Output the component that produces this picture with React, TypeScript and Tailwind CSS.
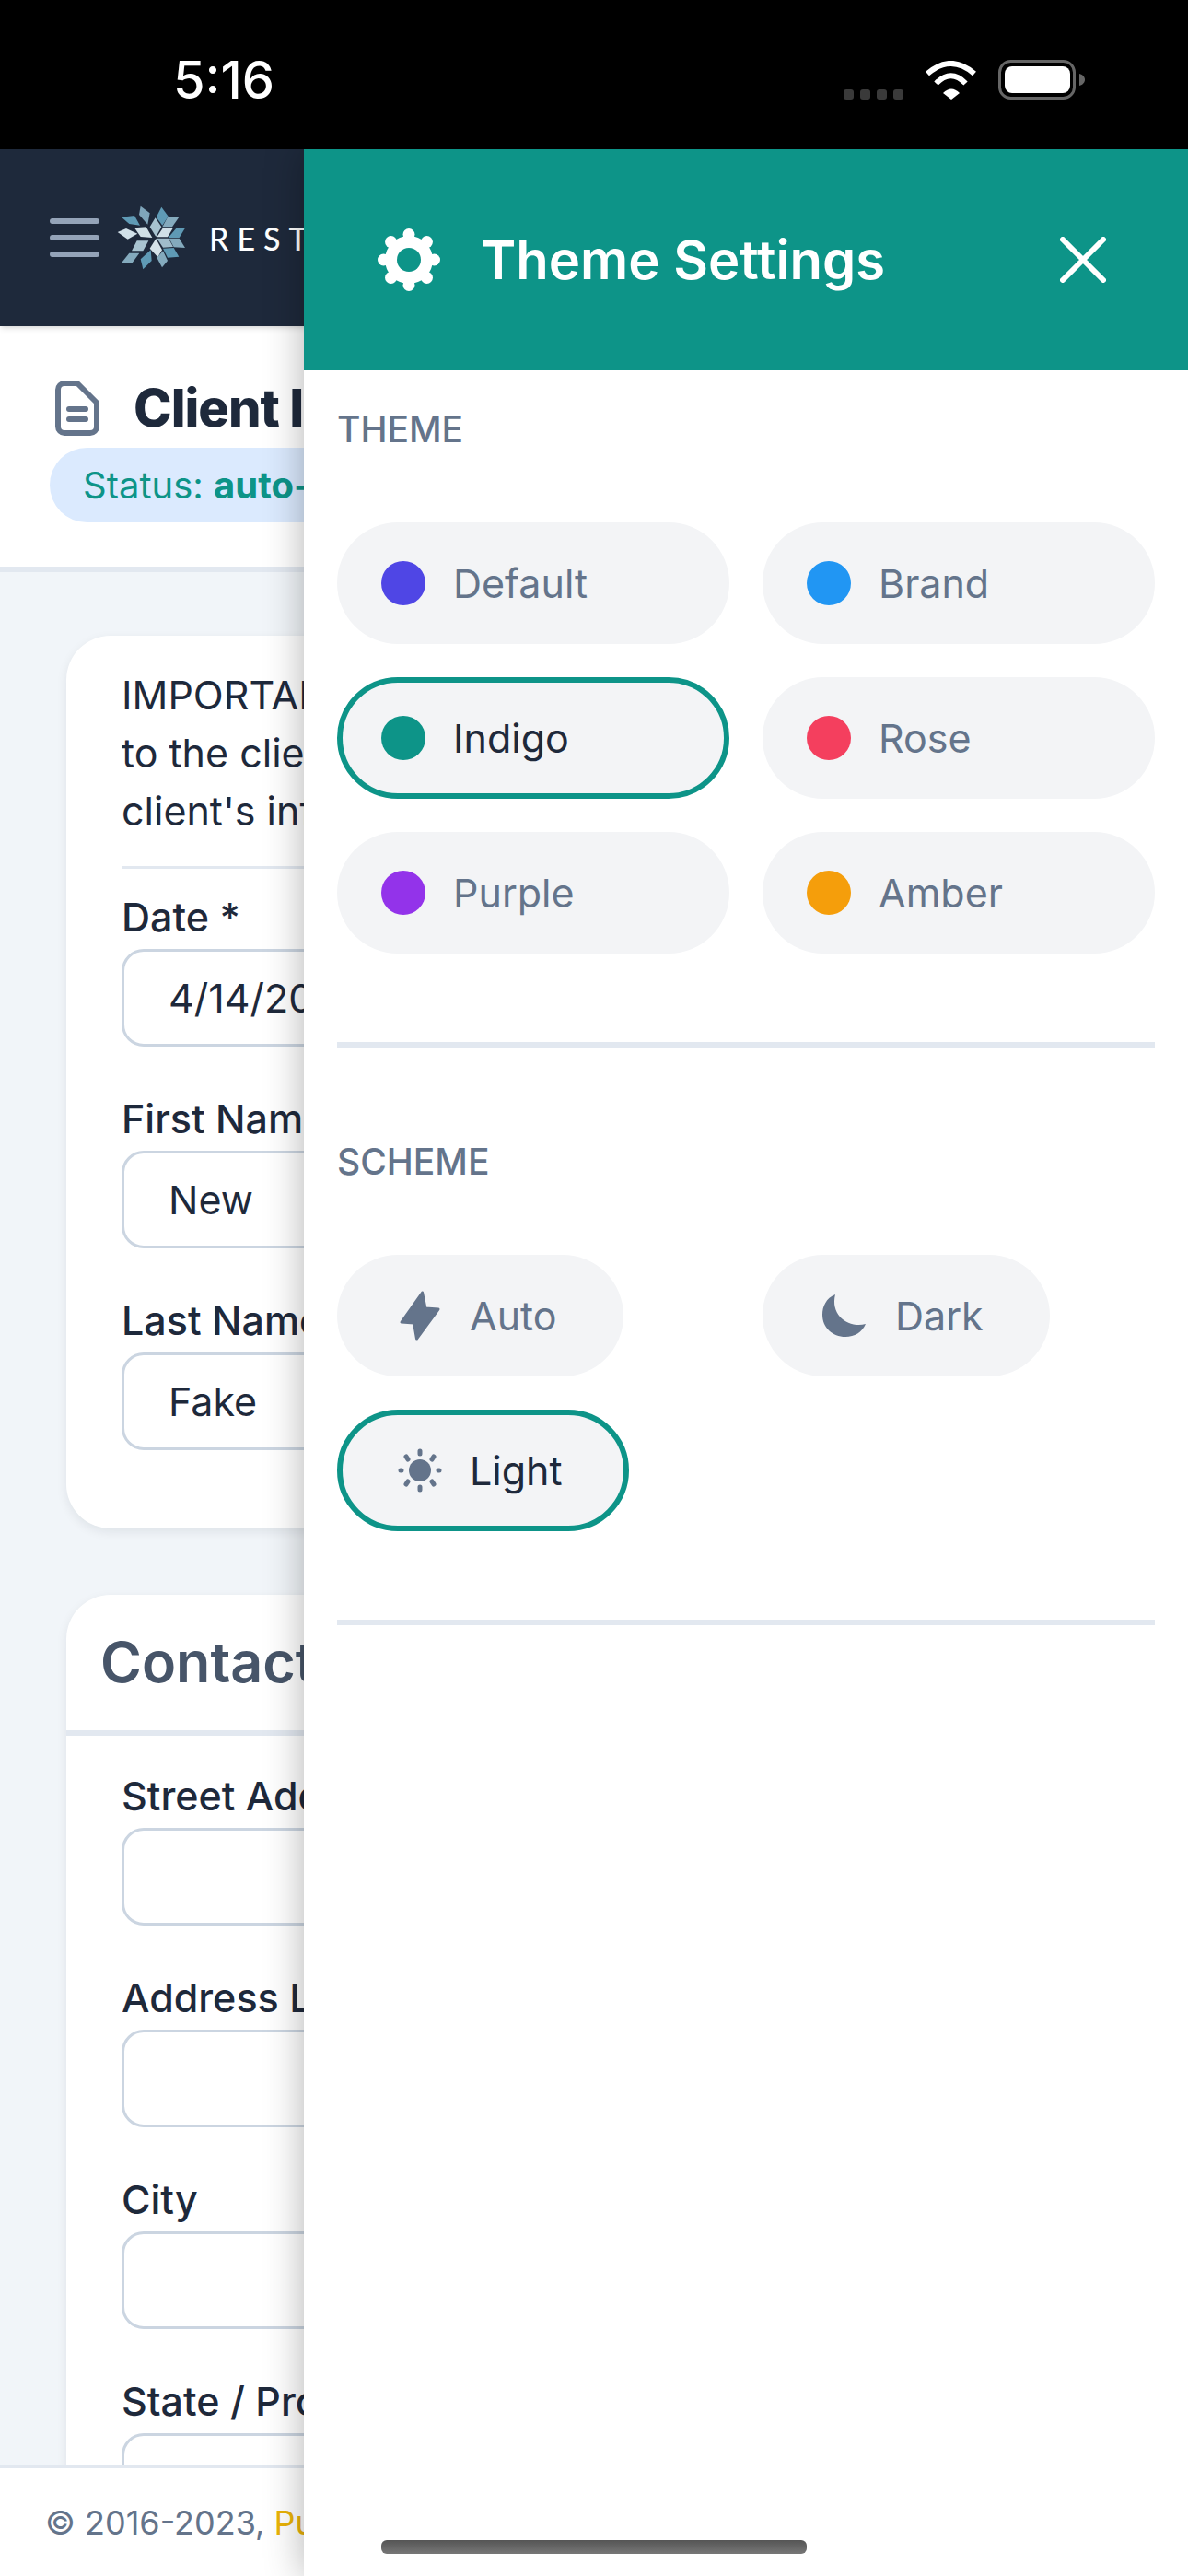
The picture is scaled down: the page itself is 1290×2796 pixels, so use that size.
const themes = [
  { name: "Default", dot: "bg-[#4f46e5]", active: false },
  { name: "Brand", dot: "bg-[#2196f3]", active: false },
  { name: "Indigo", dot: "bg-[#0d9488]", active: true },
  { name: "Rose", dot: "bg-[#f43f5e]", active: false },
  { name: "Purple", dot: "bg-[#9333ea]", active: false },
  { name: "Amber", dot: "bg-[#f59e0b]", active: false },
]

const kites = [
  { p: "367,100 372,72 402,95 395,132", c: "#7fa5ba" },
  { p: "310,108 352,103 370,135 335,130", c: "#5f9ab5" },
  { p: "297,157 325,145 362,162 330,180", c: "#d1e0e8" },
  { p: "352,143 390,140 410,175 372,172", c: "#d0dfe6" },
  { p: "360,185 398,185 380,218 343,218", c: "#a8c3d0" },
  { p: "335,225 368,225 345,257 310,257", c: "#84aabd" },
  { p: "372,245 405,215 408,250 380,278", c: "#5f9ab5" },
  { p: "402,210 422,178 442,215 428,238", c: "#d5e2e9" },
  { p: "425,240 445,218 460,250 442,272", c: "#84aabd" },
  { p: "445,210 480,208 497,237 460,240", c: "#5f9ab5" },
  { p: "425,177 463,177 478,205 445,207", c: "#a0bccb" },
  { p: "465,177 498,177 517,208 480,206", c: "#84aabd" },
  { p: "490,142 518,142 498,175 462,175", c: "#5f9ab5" },
  { p: "425,173 445,143 478,143 460,173", c: "#d1e0e8" },
  { p: "460,108 497,108 475,140 443,140", c: "#84aabd" },
  { p: "440,75 462,105 443,135 423,108", c: "#5f9ab5" },
  { p: "420,110 440,140 422,172 402,140", c: "#a8c3d0" },
]

function Logo() {
  return (
    <svg width="75" height="70" viewBox="295 70 225 210" className="shrink-0">
      {kites.map((k, i) => (
        <polygon key={i} points={k.p} fill={k.c} />
      ))}
    </svg>
  )
}

function Gear() {
  const teeth = [0, 45, 90, 135, 180, 225, 270, 315]
  return (
    <svg width="68" height="68" viewBox="0 0 68 68" className="shrink-0">
      <circle cx="34" cy="34" r="26" fill="#fff" />
      {teeth.map((t) => (
        <circle
          key={t}
          cx={34 + 27.5 * Math.cos((t * Math.PI) / 180)}
          cy={34 + 27.5 * Math.sin((t * Math.PI) / 180)}
          r="6.5"
          fill="#fff"
        />
      ))}
      <circle cx="34" cy="34" r="13" fill="#0d9488" />
    </svg>
  )
}

function BoltIcon() {
  return (
    <svg width="48" height="54" viewBox="0 0 48 54" className="shrink-0">
      <path
        d="M26.6 2 L4 34 L17.5 35 L20.5 52 L44 20 L30 19 Z"
        fill="#64748b"
        stroke="#64748b"
        strokeWidth="3"
        strokeLinejoin="round"
      />
    </svg>
  )
}

function MoonIcon() {
  return (
    <svg width="48" height="48" viewBox="0 0 48 48" className="shrink-0">
      <path d="M14 1 C4 5 0 14 0 23 C0 37 11 47 25 47 C35 47 43 42 47 33 C30 38 8 25 14 1Z" fill="#64748b" />
    </svg>
  )
}

function SunIcon() {
  return (
    <svg width="48" height="48" viewBox="0 0 48 48" className="shrink-0" stroke="#64748b" strokeWidth="5" strokeLinecap="round">
      <circle cx="24" cy="24" r="12" fill="#64748b" stroke="none" />
      <path d="M24 3V6M24 42V45M3 24H4M44 24H45M9 9L11 12M39 9L37 12M9 39L11 36M39 39L37 36" fill="none" />
    </svg>
  )
}

function Field({ label, value = "" }: { label: string; value?: string }) {
  return (
    <div className="mt-[47px] first:mt-0">
      <div className="text-[43px] leading-[63px] font-medium text-[#1e293b] whitespace-nowrap">{label}</div>
      <input
        readOnly
        value={value}
        className="mt-[3px] block h-[106px] w-full rounded-[24px] border-[3px] border-[#cbd5e1] bg-white pl-[48px] text-[43px] text-[#1e293b]"
      />
    </div>
  )
}

function Pill({ active, children, className }: { active: boolean; children: React.ReactNode; className: string }) {
  return (
    <div
      className={`flex h-[132px] items-center rounded-full border-[6px] bg-[#f3f4f6] text-[43px] ${
        active ? "border-[#0d9488] text-[#1e293b]" : "border-transparent text-[#64748b]"
      } ${className}`}
    >
      {children}
    </div>
  )
}

export default function App() {
  return (
    <div className="relative flex h-[2796px] w-[1290px] flex-col overflow-hidden bg-[#f1f5f9] font-['Inter',sans-serif]">
      {/* Status bar */}
      <div className="flex h-[162px] shrink-0 items-end bg-black pb-[54px] pl-[188px] pr-[112px]">
        <div className="-mb-[7px] text-[56px] leading-[56px] font-medium text-white">5:16</div>
        <div className="ml-auto flex items-end gap-[23px]">
          <div className="flex gap-[7px]">
            <div className="h-[11px] w-[11px] rounded-[3px] bg-[#3a3a3a]" />
            <div className="h-[11px] w-[11px] rounded-[3px] bg-[#3a3a3a]" />
            <div className="h-[11px] w-[11px] rounded-[3px] bg-[#3a3a3a]" />
            <div className="h-[11px] w-[11px] rounded-[3px] bg-[#3a3a3a]" />
          </div>
          <svg width="57" height="42" viewBox="0 0 57 42">
            <path d="M3 14 Q28.5 -8 54 14" fill="none" stroke="#fff" strokeWidth="6" />
            <path d="M12.5 24.5 Q28.5 8 44.5 24.5" fill="none" stroke="#fff" strokeWidth="6" />
            <path d="M20 35 Q29 26 38 35 L29 42 Z" fill="#fff" />
          </svg>
          <svg width="94" height="43" viewBox="0 0 94 43">
            <rect x="1.5" y="1.5" width="81" height="40" rx="12" fill="none" stroke="#666" strokeWidth="3" />
            <rect x="7" y="7" width="71" height="29" rx="8" fill="#fff" />
            <path d="M88 15 C92 16 94 19 94 21.5 C94 24 92 27 88 28 Z" fill="#666" />
          </svg>
        </div>
      </div>

      {/* App header */}
      <div className="z-10 flex h-[192px] shrink-0 items-center bg-[#1e293b] pl-[54px] shadow-md">
        <div className="flex w-[54px] shrink-0 flex-col gap-[12px]">
          <div className="h-[6px] rounded-full bg-[#94a3b8]" />
          <div className="h-[6px] rounded-full bg-[#94a3b8]" />
          <div className="h-[6px] rounded-full bg-[#94a3b8]" />
        </div>
        <div className="ml-[19px]">
          <Logo />
        </div>
        <div className="ml-[25px] font-['Lato',sans-serif] text-[34px] font-medium tracking-[9px] text-white whitespace-nowrap">
          RESTORE
        </div>
      </div>

      {/* Page header */}
      <div className="shrink-0 border-b-[6px] border-[#e2e8f0] bg-white pb-[48px] pl-[54px] pt-[53px]">
        <div className="flex h-[72px] items-center">
          <svg width="48" height="60" viewBox="0 0 48 60" fill="none" stroke="#64748b" strokeWidth="6" strokeLinecap="round" strokeLinejoin="round" className="ml-[6px] shrink-0">
            <path d="M10 3 H24 L45 24 V50 A7 7 0 0 1 38 57 H10 A7 7 0 0 1 3 50 V10 A7 7 0 0 1 10 3 Z" />
            <path d="M15 31 H33 M15 42 H33" />
          </svg>
          <div className="ml-[37px] text-[56px] font-extrabold tracking-[-1px] text-[#1e293b] whitespace-nowrap">Client In</div>
        </div>
        <div className="mt-[7px] flex h-[81px] w-[600px] items-center rounded-full bg-[#dbeafe] pl-[36px] text-[40px] text-[#0d9488] whitespace-nowrap">
          Status:&nbsp;<span className="font-bold">auto-</span>
        </div>
      </div>

      {/* Scrolling content */}
      <div className="min-h-0 flex-1 overflow-hidden px-[72px] pt-[69px]">
        <div className="rounded-[48px] bg-white pb-[85px] pl-[60px] pr-[60px] pt-[33px] shadow-[0_4px_12px_rgba(15,23,42,0.08)]">
          <div className="text-[43px] leading-[63px] text-[#1e293b] whitespace-nowrap">
            IMPORTANT
            <br />
            to the client
            <br />
            client's info
          </div>
          <div className="mt-[28px] h-[3px] bg-[#e2e8f0]" />
          <div className="mt-[21px]">
            <Field label="Date *" value="4/14/2023" />
            <Field label="First Name" value="New" />
            <Field label="Last Name" value="Fake" />
          </div>
        </div>

        <div className="mt-[72px] rounded-[48px] bg-white shadow-[0_4px_12px_rgba(15,23,42,0.08)]">
          <div className="box-content flex h-[147px] items-center border-b-[6px] border-[#e2e8f0] pl-[37px] text-[61px] font-semibold text-[#475569]">
            Contact
          </div>
          <div className="px-[60px] pt-[34px]">
            <Field label="Street Address" />
            <Field label="Address Line 2" />
            <Field label="City" />
            <Field label="State / Province" />
          </div>
        </div>
      </div>

      {/* Footer */}
      <div className="flex h-[120px] shrink-0 items-center border-t-[3px] border-[#e2e8f0] bg-white pl-[49px] text-[36px] text-[#64748b] whitespace-nowrap">
        © 2016-2023,&nbsp;<span className="text-[#eab308]">Pu</span>
      </div>

      {/* Theme settings drawer */}
      <div className="absolute bottom-0 left-[330px] right-0 top-[162px] z-20 bg-white shadow-[0_0_40px_rgba(0,0,0,0.3)]">
        <div className="flex h-[240px] items-center bg-[#0d9488] pl-[80px] pr-[89px]">
          <Gear />
          <div className="ml-[44px] text-[58px] font-semibold text-white">Theme Settings</div>
          <svg width="50" height="50" viewBox="0 0 50 50" className="ml-auto" stroke="#fff" strokeWidth="6" strokeLinecap="round">
            <path d="M3 3 L47 47 M47 3 L3 47" />
          </svg>
        </div>

        <div className="px-[36px]">
          <div className="pt-[35px] text-[39px] leading-[58px] font-medium text-[#64748b]">THEME</div>
          <div className="mt-[72px] grid grid-cols-2 gap-[36px]">
            {themes.map((t) => (
              <Pill key={t.name} active={t.active} className="pl-[42px]">
                <div className={`h-[48px] w-[48px] shrink-0 rounded-full ${t.dot}`} />
                <span className="ml-[30px]">{t.name}</span>
              </Pill>
            ))}
          </div>
          <div className="mt-[96px] h-[6px] bg-[#e2e8f0]" />

          <div className="pt-[95px] text-[39px] leading-[58px] font-medium text-[#64748b]">SCHEME</div>
          <div className="mt-[72px] grid grid-cols-2 justify-items-start gap-x-[36px] gap-y-[36px]">
            <Pill active={false} className="pl-[60px] pr-[66px]">
              <BoltIcon />
              <span className="ml-[30px]">Auto</span>
            </Pill>
            <Pill active={false} className="pl-[59px] pr-[66px]">
              <MoonIcon />
              <span className="ml-[31px]">Dark</span>
            </Pill>
            <Pill active={true} className="pl-[60px] pr-[66px]">
              <SunIcon />
              <span className="ml-[30px]">Light</span>
            </Pill>
          </div>
          <div className="mt-[96px] h-[6px] bg-[#e2e8f0]" />
        </div>

        <div className="absolute bottom-[24px] left-[84px] h-[15px] w-[462px] rounded-[6px] bg-gradient-to-b from-[#555555] to-[#777777]" />
      </div>
    </div>
  )
}
